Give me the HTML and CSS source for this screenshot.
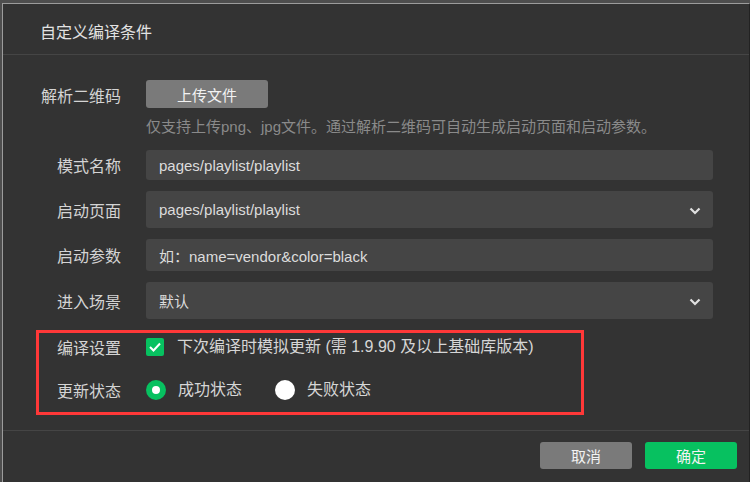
FILE: index.html
```html
<!DOCTYPE html>
<html lang="zh-CN">
<head>
<meta charset="utf-8">
<title>自定义编译条件</title>
<link rel="stylesheet" href="styles.css">
</head>
<body>
<div class="dialog">
  <div class="header">自定义编译条件</div>
  <div class="body">
    <div class="row row-upload">
      <div class="label">解析二维码</div>
      <div class="control">
        <button class="btn btn-gray btn-upload">上传文件</button>
        <div class="hint">仅支持上传png、jpg文件。通过解析二维码可自动生成启动页面和启动参数。</div>
      </div>
    </div>
    <div class="fields">
      <div class="row">
        <div class="label">模式名称</div>
        <div class="field field-sm">pages/playlist/playlist</div>
      </div>
      <div class="row">
        <div class="label">启动页面</div>
        <div class="field field-select">pages/playlist/playlist
          <svg class="chev" width="12" height="8" viewBox="0 0 12 8"><path d="M1.5 1.5 L6 6 L10.5 1.5" fill="none" stroke="#e0e0e0" stroke-width="2.2"/></svg>
        </div>
      </div>
      <div class="row">
        <div class="label">启动参数</div>
        <div class="field field-md">如：name=vendor&amp;color=black</div>
      </div>
      <div class="row">
        <div class="label">进入场景</div>
        <div class="field field-select">默认
          <svg class="chev" width="12" height="8" viewBox="0 0 12 8"><path d="M1.5 1.5 L6 6 L10.5 1.5" fill="none" stroke="#e0e0e0" stroke-width="2.2"/></svg>
        </div>
      </div>
    </div>
    <div class="mark">
      <div class="row row-opt">
        <div class="label">编译设置</div>
        <div class="opt">
          <span class="checkbox"><svg width="14" height="12" viewBox="0 0 14 12"><path d="M2 6 L5.5 9.5 L12 2.5" fill="none" stroke="#fff" stroke-width="2"/></svg></span>
          <span class="opt-text">下次编译时模拟更新 (需 1.9.90 及以上基础库版本)</span>
        </div>
      </div>
      <div class="row row-opt">
        <div class="label">更新状态</div>
        <div class="opt">
          <span class="radio radio-on"></span>
          <span class="opt-text">成功状态</span>
          <span class="radio radio-off"></span>
          <span class="opt-text">失败状态</span>
        </div>
      </div>
    </div>
  </div>
  <div class="footer">
    <button class="btn btn-gray btn-foot">取消</button>
    <button class="btn btn-green btn-foot">确定</button>
  </div>
</div>
</body>
</html>
```

FILE: styles.css
```css
html, body {
  margin: 0;
  padding: 0;
  height: 100%;
}
body {
  background: #4e4e4e;
  font-family: "Liberation Sans", "Noto Sans CJK SC", sans-serif;
  overflow: hidden;
}
.dialog {
  box-sizing: border-box;
  margin: 3px 0 0 2px;
  width: 748px;
  height: 479px;
  background: #333333;
  border-top: 1px solid #9c9c9c;
  border-left: 1px solid #9c9c9c;
  border-right: 1px solid #222222;
  display: flex;
  flex-direction: column;
}
.header {
  height: 46px;
  padding: 4px 0 0 37px;
  border-bottom: 1px solid #454545;
  display: flex;
  align-items: center;
  color: #e2e2e2;
  font-size: 16px;
}
.body {
  padding: 25px 36px 0 37px;
}
.row {
  display: flex;
  align-items: center;
  gap: 25px;
}
.label {
  width: 81px;
  flex: none;
  text-align: right;
  color: #d4d4d4;
  font-size: 16px;
  line-height: 20px;
  white-space: nowrap;
}
.fields .label {
  padding-top: 4px;
}
.row-upload {
  align-items: flex-start;
}
.row-upload .label {
  padding-top: 7px;
}
.control {
  display: flex;
  flex-direction: column;
  align-items: flex-start;
}
.btn {
  border: none;
  border-radius: 3px;
  font-family: "Liberation Sans", "Noto Sans CJK SC", sans-serif;
  font-size: 15px;
  color: #f2f2f2;
  padding: 0;
  cursor: pointer;
}
.btn-gray {
  background: #7a7a7a;
}
.btn-green {
  background: #07c160;
}
.btn-upload {
  width: 122px;
  height: 28px;
}
.hint {
  margin-top: 9px;
  font-size: 15px;
  line-height: 20px;
  color: #8a8a8a;
  white-space: nowrap;
}
.fields {
  margin-top: 13px;
  display: flex;
  flex-direction: column;
  gap: 11px;
}
.field {
  flex: 1;
  box-sizing: border-box;
  background: #454545;
  border-radius: 3px;
  padding: 0 12px 0 13px;
  display: flex;
  align-items: center;
  justify-content: space-between;
  color: #dcdcdc;
  font-size: 15px;
}
.field-sm { height: 30px; }
.field-md { height: 32px; }
.field-select { height: 37px; }
.chev {
  flex: none;
  margin-top: 2px;
}
.mark {
  box-sizing: border-box;
  margin: 11px 0 0 -4px;
  width: 548px;
  height: 85px;
  border: 3px solid #ff3838;
  padding: 2px 0 0 1px;
  display: flex;
  flex-direction: column;
  gap: 19px;
}
.row-opt {
  height: 24px;
}
.row-opt .label {
  padding-top: 3px;
}
.opt {
  display: flex;
  align-items: center;
}
.checkbox {
  width: 18px;
  height: 18px;
  border-radius: 2px;
  background: #07c160;
  display: flex;
  align-items: center;
  justify-content: center;
  margin-right: 13px;
}
.opt-text {
  color: #d6d6d6;
  font-size: 16px;
  line-height: 20px;
  white-space: nowrap;
}
.radio {
  box-sizing: border-box;
  width: 20px;
  height: 20px;
  border-radius: 50%;
  margin-right: 12px;
}
.radio-on {
  border: 6.5px solid #07c160;
  background: #ffffff;
}
.radio-off {
  background: #ffffff;
  margin-left: 33px;
}
.footer {
  margin-top: auto;
  border-top: 1px solid #454545;
  height: 40px;
  padding: 11px 12px 0 0;
  display: flex;
  justify-content: flex-end;
  gap: 13px;
}
.btn-foot {
  width: 92px;
  height: 27px;
}
```
